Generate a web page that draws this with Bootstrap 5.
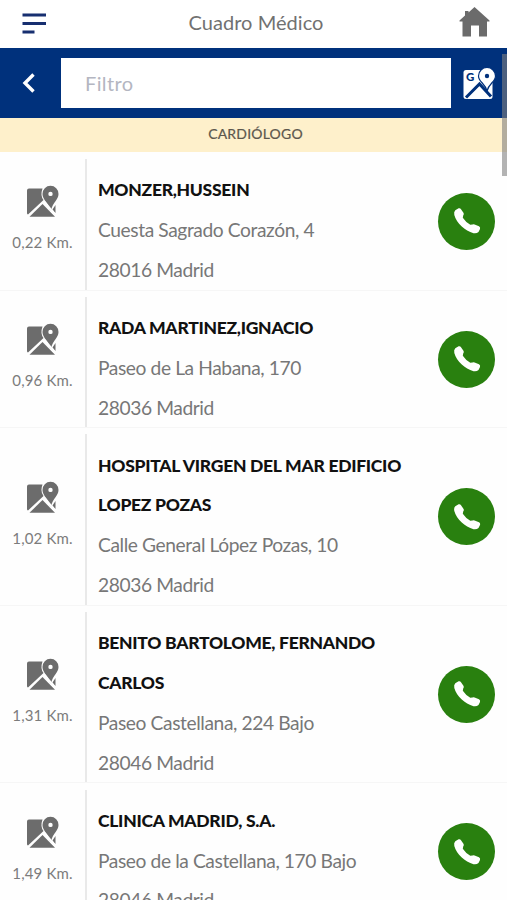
<!DOCTYPE html>
<html lang="es">
<head>
<meta charset="utf-8">
<meta name="viewport" content="width=device-width, initial-scale=1">
<title>Cuadro Médico</title>
<link href="https://cdn.jsdelivr.net/npm/bootstrap@5.3.0/dist/css/bootstrap.min.css" rel="stylesheet">
<style>
html, body { height: 100%; overflow: hidden; }
body { font-family: Lato, "Open Sans", sans-serif; color: #777; background: #fefefe; }
.screen { height: 900px; }
.topbar { height: 48px; padding: 0 17px 0 22px; }
.topbar h1 { font-size: 20px; font-weight: 400; line-height: 42px; color: #717171; letter-spacing: .04px; padding: 0 0 4px 6px; }
.home { margin-bottom: 3px; }
.searchbar { height: 70px; background: #00317c; padding: 0 11px 0 22px; }
.back { width: 39px; line-height: 0; }
.filter { height: 50px; border: 0; border-radius: 0; font-size: 20px; padding: 0 24px; letter-spacing: .4px; }
.filter::placeholder { color: #b4b6c1; }
.map-button { margin: 2px 0 0 12px; }
.specialty { height: 34px; background: #fef0cb; color: #5c574d; font-size: 14px; line-height: 32px; letter-spacing: .2px; padding-left: 4px; margin-bottom: 7px; -webkit-text-stroke: .2px #5c574d; }
.entry { border-bottom: 1px solid #f6f6f6; margin-bottom: 6.1px; }
.distance { width: 87px; border-right: 2px solid #e9e9e9; font-size: 15px; letter-spacing: .15px; line-height: 20px; color: #7c7c7c; padding-bottom: 11px; }
.distance svg { margin-bottom: 14px; color: #6c6c6c; }
.details { padding: 11.1px 0 0 11px; font-size: 19.2px; letter-spacing: -.4px; line-height: 39.85px; }
.doctor { font-size: 17.5px; font-weight: 900; line-height: 39.85px; letter-spacing: -.28px; color: #111; margin: 0; }
.call { width: 57px; height: 57px; background: #29800f; margin: 0 12px 6px 0; }
.scroll-thumb { right: 0; top: 54px; width: 5px; height: 122px; background: rgba(128,128,128,.6); }
</style>
</head>
<body>
<svg class="d-none" aria-hidden="true">
  <symbol id="map-pin" viewBox="0 0 33 33">
    <path fill="currentColor" d="M3 3.500H16.500Q14 10.500 17.500 15L2 29.500Q1 29 1 28V5.500Q1 3.500 3 3.500Z"/>
    <path fill="currentColor" d="M16.500 19L29 31.800H3.500Z"/>
    <path fill="currentColor" d="M26.500 24.500L29.500 20V28Z"/>
    <path fill="currentColor" fill-rule="evenodd" d="M24.500.8A8 8 0 0 0 16.500 9C16.500 14.500 22 17 24 25.500H25C27 17 32.500 14.500 32.500 9A8 8 0 0 0 24.500.8ZM24.500 6.700A2.200 2.200 0 1 1 24.500 11.100A2.200 2.200 0 1 1 24.500 6.700Z"/>
    <path d="M18.500 17L28.300 29" stroke="#fff" stroke-width="2.200" fill="none"/>
  </symbol>
  <symbol id="phone" viewBox="0 0 28 28">
    <path fill="#fff" d="M2.300 3.200L5.600 1.300Q7.100.7 8 2.200L10.600 6Q11.200 7.400 10.200 8.600L9.800 10.800Q12.500 15 17.300 17.800L19.500 17.400Q20.500 16.900 21.600 17.500L26 19.300Q27.600 20.300 27 22L25.500 25Q23.500 26.800 20.500 26.200C12 24 3.500 16 1.300 8Q.6 4.800 2.300 3.200Z"/>
  </symbol>
</svg>
<div class="screen d-flex flex-column overflow-hidden position-relative">
  <header class="topbar bg-white d-flex align-items-center justify-content-between flex-shrink-0">
    <svg width="25" height="22" viewBox="0 0 25 22" fill="#172f70"><path d="M.5.500H24V3.500H.5zM.5 9H24V12H.5zM.5 17.500H12.500V20.500H.5z"/></svg>
    <h1 class="m-0">Cuadro Médico</h1>
    <svg class="home" width="31" height="31" viewBox="0 0 31 31" fill="#6b6b6b"><path d="M15.500 0L30.500 13.500V14.500H28V29.500H20V18.500H12V29.500H3.500V14.500H.5V13.500L6 8.500V4H9.500V5.500Z"/></svg>
  </header>
  <div class="searchbar d-flex align-items-center flex-shrink-0">
    <div class="back flex-shrink-0"><svg width="14" height="20" viewBox="0 0 14 20" fill="none" stroke="#fff" stroke-width="3.400"><path d="M11.500 1.500L3 10L11.500 18.500"/></svg></div>
    <input class="filter form-control" type="text" placeholder="Filtro" aria-label="Filtro">
    <svg class="map-button flex-shrink-0" width="33" height="34" viewBox="0 0 33 34">
      <rect x=".5" y="3" width="29" height="29" rx="2.500" fill="#fff"/>
      <path d="M3 30.500L16.500 17L28 29.500" fill="none" stroke="#00317c" stroke-width="3"/>
      <path d="M24 .5A8.500 8.500 0 0 0 15.500 9C15.500 15 22 16 24 24C26 16 32.500 15 32.500 9A8.500 8.500 0 0 0 24 .5Z" fill="#fff" stroke="#00317c" stroke-width="1.200"/>
      <circle cx="24" cy="9" r="2.200" fill="#00317c"/>
      <text x="3" y="14" font-family="Lato" font-weight="900" font-size="11.500" fill="#00317c">G</text>
    </svg>
  </div>
  <div class="specialty text-center flex-shrink-0">CARDIÓLOGO</div>
  <main>
    <article class="entry d-flex">
      <div class="distance d-flex flex-column align-items-center justify-content-center flex-shrink-0"><svg width="33" height="33"><use href="#map-pin"/></svg><span>0,22 Km.</span></div>
      <div class="details flex-grow-1"><h2 class="doctor">MONZER,HUSSEIN</h2><div>Cuesta Sagrado Corazón, 4</div><div>28016 Madrid</div></div>
      <a class="call rounded-circle d-flex align-items-center justify-content-center align-self-center flex-shrink-0" aria-label="Llamar"><svg width="28" height="28"><use href="#phone"/></svg></a>
    </article>
    <article class="entry d-flex">
      <div class="distance d-flex flex-column align-items-center justify-content-center flex-shrink-0"><svg width="33" height="33"><use href="#map-pin"/></svg><span>0,96 Km.</span></div>
      <div class="details flex-grow-1"><h2 class="doctor">RADA MARTINEZ,IGNACIO</h2><div>Paseo de La Habana, 170</div><div>28036 Madrid</div></div>
      <a class="call rounded-circle d-flex align-items-center justify-content-center align-self-center flex-shrink-0" aria-label="Llamar"><svg width="28" height="28"><use href="#phone"/></svg></a>
    </article>
    <article class="entry d-flex">
      <div class="distance d-flex flex-column align-items-center justify-content-center flex-shrink-0"><svg width="33" height="33"><use href="#map-pin"/></svg><span>1,02 Km.</span></div>
      <div class="details flex-grow-1"><h2 class="doctor">HOSPITAL VIRGEN DEL MAR EDIFICIO<br>LOPEZ POZAS</h2><div>Calle General López Pozas, 10</div><div>28036 Madrid</div></div>
      <a class="call rounded-circle d-flex align-items-center justify-content-center align-self-center flex-shrink-0" aria-label="Llamar"><svg width="28" height="28"><use href="#phone"/></svg></a>
    </article>
    <article class="entry d-flex">
      <div class="distance d-flex flex-column align-items-center justify-content-center flex-shrink-0"><svg width="33" height="33"><use href="#map-pin"/></svg><span>1,31 Km.</span></div>
      <div class="details flex-grow-1"><h2 class="doctor">BENITO BARTOLOME, FERNANDO<br>CARLOS</h2><div>Paseo Castellana, 224 Bajo</div><div>28046 Madrid</div></div>
      <a class="call rounded-circle d-flex align-items-center justify-content-center align-self-center flex-shrink-0" aria-label="Llamar"><svg width="28" height="28"><use href="#phone"/></svg></a>
    </article>
    <article class="entry d-flex">
      <div class="distance d-flex flex-column align-items-center justify-content-center flex-shrink-0"><svg width="33" height="33"><use href="#map-pin"/></svg><span>1,49 Km.</span></div>
      <div class="details flex-grow-1"><h2 class="doctor">CLINICA MADRID, S.A.</h2><div>Paseo de la Castellana, 170 Bajo</div><div>28046 Madrid</div></div>
      <a class="call rounded-circle d-flex align-items-center justify-content-center align-self-center flex-shrink-0" aria-label="Llamar"><svg width="28" height="28"><use href="#phone"/></svg></a>
    </article>
  </main>
  <div class="scroll-thumb position-absolute"></div>
</div>
<script src="https://cdn.jsdelivr.net/npm/bootstrap@5.3.0/dist/js/bootstrap.bundle.min.js"></script>
</body>
</html>
